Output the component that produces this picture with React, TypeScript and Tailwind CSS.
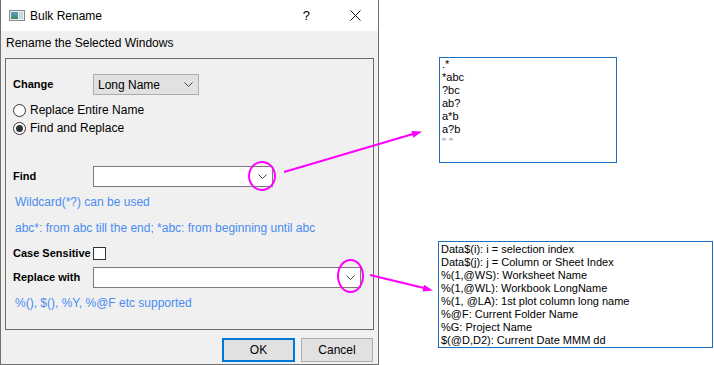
import React from 'react';

const FONT = { fontFamily: '"Liberation Sans", Arial, sans-serif' };

function Chevron() {
    return (
        <svg width="9" height="5" viewBox="0 0 9 5" className="shrink-0">
            <path d="M0.5 0.5 L4.5 4.5 L8.5 0.5" fill="none" stroke="#444" strokeWidth="1" />
        </svg>
    );
}

function Radio({ checked, label }: { checked?: boolean; label: string }) {
    return (
        <div className="flex items-center h-[16px]">
            <div className="w-[13px] h-[13px] rounded-full border border-[#333] bg-white flex items-center justify-center">
                {checked && <div className="w-[7px] h-[7px] rounded-full bg-[#333]" />}
            </div>
            <span className="ml-[4px] text-[12px] leading-[16px]">{label}</span>
        </div>
    );
}

function TitleIcon() {
    return (
        <svg width="16" height="11" viewBox="0 0 16 11">
            <defs>
                <linearGradient id="g1" x1="0" y1="0" x2="0" y2="1">
                    <stop offset="0" stopColor="#5fa0c8" />
                    <stop offset="1" stopColor="#3f8a5a" />
                </linearGradient>
            </defs>
            <rect x="0.5" y="0.5" width="15" height="10" fill="#e8eef2" stroke="#8a8a8a" />
            <rect x="2" y="2" width="7" height="7" fill="url(#g1)" />
            <rect x="10" y="2" width="4" height="7" fill="#c8d6de" />
        </svg>
    );
}

export default function App() {
    const box1 = ['.*', '*abc', '?bc', 'ab?', 'a*b', 'a?b', '" "'];
    const box2 = [
        'Data$(i): i = selection index',
        'Data$(j): j = Column or Sheet Index',
        '%(1,@WS): Worksheet Name',
        '%(1,@WL): Workbook LongName',
        '%(1, @LA): 1st plot column long name',
        '%@F: Current Folder Name',
        '%G: Project Name',
        '$(@D,D2): Current Date MMM dd',
    ];

    const label = 'w-[80px] shrink-0 whitespace-nowrap font-bold text-[11px]';

    return (
        <div className="relative w-[714px] h-[365px] bg-white flex text-black overflow-hidden" style={FONT}>
            {/* dialog */}
            <div className="w-[379px] h-[365px] border-l border-r border-b border-[#707070] bg-[#f0f0f0] flex flex-col">
                <div className="h-[31px] bg-white flex items-center shrink-0">
                    <div className="ml-[8px] flex items-center">
                        <TitleIcon />
                    </div>
                    <span className="ml-[5px] text-[12px]">Bulk Rename</span>
                    <span className="ml-auto text-[13px] mr-[40px]">?</span>
                    <svg width="11" height="11" viewBox="0 0 11 11" className="mr-[17px]">
                        <path d="M0.5 0.5 L10.5 10.5 M10.5 0.5 L0.5 10.5" stroke="#111" strokeWidth="1" />
                    </svg>
                </div>

                <div className="px-[4px] flex flex-col flex-1">
                    <div className="h-[27px] pt-[4px] pl-[1px] text-[12px] leading-[16px]">Rename the Selected Windows</div>

                    <div className="h-[272px] border border-[#6a6a6a] pl-[7px] pt-[15px] flex flex-col">
                        <div className="flex items-center h-[21px]">
                            <span className={label}>Change</span>
                            <div className="w-[106px] h-[21px] bg-[#e1e1e1] border border-[#adadad] flex items-center pl-[4px] pr-[5px]">
                                <span className="text-[12px] flex-1">Long Name</span>
                                <Chevron />
                            </div>
                        </div>

                        <div className="mt-[7px]">
                            <Radio label="Replace Entire Name" />
                        </div>
                        <div className="mt-[2px]">
                            <Radio checked label="Find and Replace" />
                        </div>

                        <div className="flex items-center h-[21px] mt-[30px]">
                            <span className={label}>Find</span>
                            <div className="w-[180px] h-[21px] bg-white border border-[#7a7a7a] flex items-center justify-end pr-[5px]">
                                <Chevron />
                            </div>
                        </div>

                        <div className="mt-[7px] ml-[2px] text-[12px] leading-[16px] text-[#4a8cf0]">Wildcard(*?) can be used</div>
                        <div className="mt-[10px] ml-[2px] text-[12px] leading-[16px] text-[#4a8cf0] whitespace-nowrap">
                            abc*: from abc till the end; *abc: from beginning until abc
                        </div>

                        <div className="flex items-center h-[16px] mt-[9px]">
                            <span className={label}>Case Sensitive</span>
                            <div className="w-[13px] h-[13px] border border-[#333] bg-white" />
                        </div>

                        <div className="flex items-center h-[21px] mt-[6px]">
                            <span className={label}>Replace with</span>
                            <div className="w-[268px] h-[21px] bg-white border border-[#7a7a7a] flex items-center justify-end pr-[5px]">
                                <Chevron />
                            </div>
                        </div>

                        <div className="mt-[7px] ml-[2px] text-[12px] leading-[16px] text-[#4a8cf0]">%(), $(), %Y, %@F etc supported</div>
                    </div>

                    <div className="flex justify-end gap-[6px] mt-[8px] pr-[1px]">
                        <button className="w-[73px] h-[24px] bg-[#e1e1e1] border-2 border-[#0078d7] text-[12px]">OK</button>
                        <button className="w-[72px] h-[24px] bg-[#e1e1e1] border border-[#adadad] text-[12px]">Cancel</button>
                    </div>
                </div>
            </div>

            {/* annotation boxes */}
            <div className="flex flex-col pl-[59px] pt-[57px] text-[11px] leading-[13px]">
                <div className="ml-[1px] w-[178px] h-[106px] border border-[#1b6ec2] bg-white pl-[2px] overflow-hidden">
                    {box1.map((t, i) => (
                        <div key={i} className={i === 6 ? 'text-[#888]' : ''}>{t}</div>
                    ))}
                </div>
                <div className="mt-[78px] w-[275px] h-[107px] border border-[#1b6ec2] bg-white pl-[2px] pt-[1px]">
                    {box2.map((t, i) => (
                        <div key={i}>{t}</div>
                    ))}
                </div>
            </div>

            {/* callout arrows */}
            <svg className="absolute inset-0 pointer-events-none" width="714" height="365" viewBox="0 0 714 365">
                <ellipse cx="262" cy="176" rx="13" ry="14" fill="none" stroke="#ff00ff" strokeWidth="2" />
                <ellipse cx="350.5" cy="276" rx="12.5" ry="16" fill="none" stroke="#ff00ff" strokeWidth="2" />
                <line x1="284" y1="172" x2="413" y2="134" stroke="#ff00ff" strokeWidth="2" />
                <polygon points="422,131.5 413.4,137.7 411.4,130.9" fill="#ff00ff" />
                <line x1="370" y1="275" x2="424" y2="288" stroke="#ff00ff" strokeWidth="2" />
                <polygon points="433,290.5 422.5,291.5 424.1,284.7" fill="#ff00ff" />
            </svg>
        </div>
    );
}
